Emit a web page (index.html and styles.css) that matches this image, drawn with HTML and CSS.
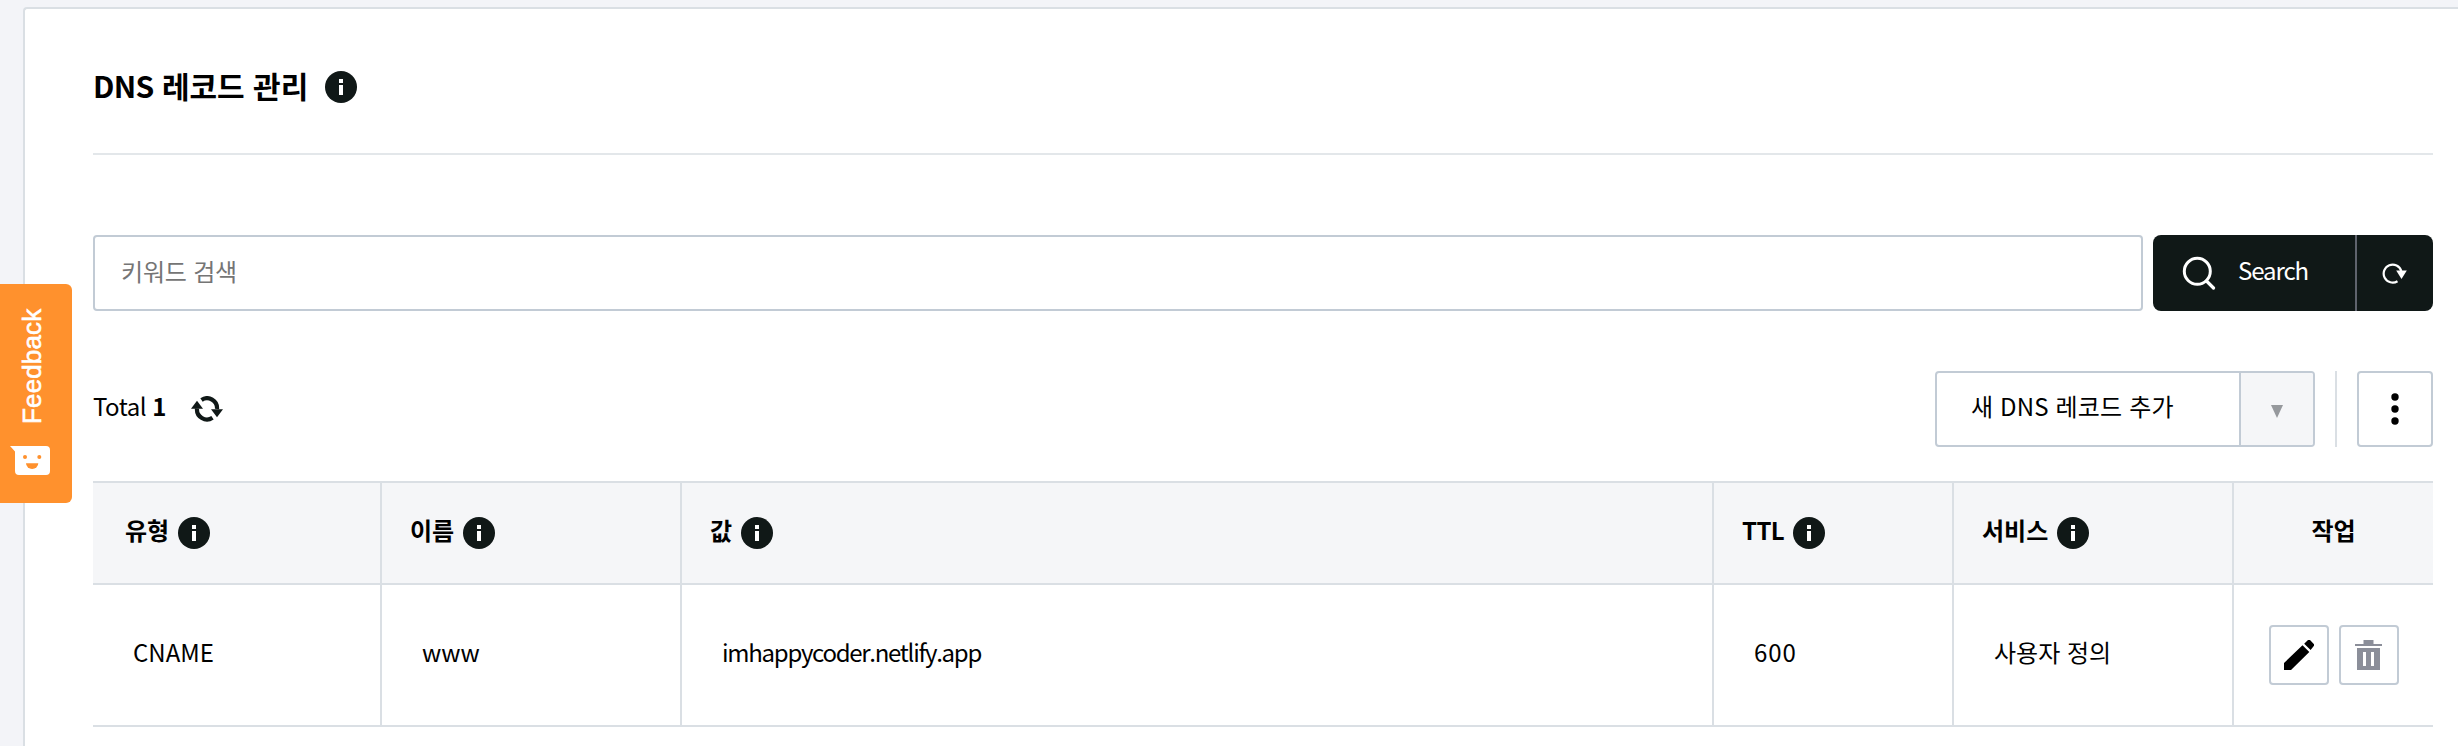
FILE: index.html
```html
<!DOCTYPE html>
<html lang="ko">
<head>
<meta charset="utf-8">
<title>DNS 레코드 관리</title>
<link rel="stylesheet" href="styles.css">
</head>
<body>
<svg class="defs" width="0" height="0">
  <symbol id="info" viewBox="0 0 32 32"><circle cx="16" cy="16" r="16" fill="#101817"/><path d="M14 8h4v4h-4zM14 14h4v10h-4z" fill="#fff"/></symbol>
</svg>
<main class="card">
  <header class="card-head">
    <h1 class="title"><span class="latin">DNS</span> 레코드 관리</h1>
    <svg class="info"><use href="#info"/></svg>
  </header>
  <form class="search">
    <input class="search-input" type="text" placeholder="키워드 검색">
    <div class="search-actions">
      <button class="search-btn" type="button">
        <svg width="34" height="34" viewBox="0 0 34 34" fill="none" stroke="#fff" stroke-width="3"><circle cx="15.3" cy="15.3" r="13"/><path d="M24.5 25l7 7" stroke-width="3.2" stroke-linecap="round"/></svg>
        <span class="search-label">Search</span>
      </button>
      <button class="reset-btn" type="button">
        <svg width="26" height="22" viewBox="0 0 26 22"><path d="M15.5 19.2A9 9 0 1 1 19.3 9" fill="none" stroke="#fff" stroke-width="2.2"/><path d="M14.2 8.6h10.6l-5.3 8.4z" fill="#fff"/></svg>
      </button>
    </div>
  </form>
  <div class="toolbar">
    <div class="total">Total <b>1</b></div>
    <svg class="refresh" width="32" height="26" viewBox="0 0 32 26"><g fill="none" stroke="#101817" stroke-width="4.2"><path d="M10.5 3.9A10 10 0 0 1 26 13"/><path d="M21.5 21.7A10 10 0 0 1 6 12.5"/></g><path d="M0 12.8h12L6 4.8zM20 13.2h12l-6 8z" fill="#101817"/></svg>
    <div class="add-group">
      <button class="add-btn" type="button">새 DNS 레코드 추가</button>
      <button class="add-caret" type="button"><svg width="12" height="13" viewBox="0 0 12 13"><path d="M0 0h12L6 13z" fill="#96999d"/></svg></button>
    </div>
    <span class="separator"></span>
    <button class="more" type="button"><svg width="8" height="32" viewBox="0 0 8 32"><circle cx="4" cy="4" r="3.7"/><circle cx="4" cy="16" r="3.7"/><circle cx="4" cy="28" r="3.7"/></svg></button>
  </div>
  <div class="table">
    <div class="row head">
      <div class="cell c-type"><span>유형</span><svg class="info"><use href="#info"/></svg></div>
      <div class="cell"><span>이름</span><svg class="info"><use href="#info"/></svg></div>
      <div class="cell"><span>값</span><svg class="info"><use href="#info"/></svg></div>
      <div class="cell"><span class="ttl">TTL</span><svg class="info"><use href="#info"/></svg></div>
      <div class="cell"><span>서비스</span><svg class="info"><use href="#info"/></svg></div>
      <div class="cell c-work"><span>작업</span></div>
    </div>
    <div class="row body">
      <div class="cell c-type"><span>CNAME</span></div>
      <div class="cell"><span>www</span></div>
      <div class="cell"><span class="host">imhappycoder.netlify.app</span></div>
      <div class="cell"><span class="num">600</span></div>
      <div class="cell"><span>사용자 정의</span></div>
      <div class="cell c-work">
        <button class="icon-btn" type="button"><svg width="30" height="30" viewBox="0 0 30 30"><path d="M0 30v-7L18.5 5.2l6.8 6.8L7 30zM20.2 3.7L24 0h2l4 4.2v1.6l-3.4 4.3z"/></svg></button>
        <button class="icon-btn" type="button"><svg width="27" height="30" viewBox="0 0 27 30"><path d="M8.5 0h10v4H27v2H0V4h8.500zM2 8h23v22H2zM8 12v14h3V12zM16 12v14h3V12z" fill="#8b8e99" fill-rule="evenodd"/></svg></button>
      </div>
    </div>
  </div>
</main>
<aside class="feedback">
  <span class="feedback-text">Feedback</span>
  <svg width="40" height="29" viewBox="0 0 40 29"><path d="M0 0h36a4 4 0 0 1 4 4v21a4 4 0 0 1-4 4H9a4 4 0 0 1-4-4V5.500z" fill="#fff"/><g fill="#ff912d"><circle cx="15" cy="11" r="2"/><circle cx="29.300" cy="11" r="2"/><path d="M16 17.300h12.300a6.150 5.700 0 0 1-12.300 0z"/></g></svg>
</aside>
</body>
</html>
```
FILE: styles.css
```css
* { box-sizing: border-box; }
html, body { height: 100%; overflow: hidden; }
body {
  margin: 0;
  padding: 7px 0 0 23px;
  background: #f3f4f8;
  color: #000;
  font: 24px/36px "Noto Sans CJK KR", "Noto Sans", sans-serif;
}
svg { display: block; flex: none; }
button { margin: 0; padding: 0; border: 0; background: none; color: inherit; font: inherit; display: flex; align-items: center; justify-content: center; }
.defs { position: absolute; }
.card {
  height: 760px;
  padding: 0 25px 0 68px;
  background: #fff;
  border: solid #dadfe4;
  border-width: 2px 0 0 2px;
  border-top-left-radius: 4px;
}
.info { width: 32px; height: 32px; }
.card-head { display: flex; align-items: flex-start; gap: 17px; height: 146px; padding-top: 62px; border-bottom: 2px solid #e3e7ea; }
.title { margin: -8px 0 0; font-size: 30px; line-height: 44px; font-weight: 700; }
.latin { letter-spacing: -.7px; }

.search { display: flex; gap: 10px; height: 76px; margin-top: 80px; }
.search-input {
  flex: 1; min-width: 0; padding: 0 26px 5px; border: 2px solid #c2cbd5; border-radius: 4px;
  background: #fff; font: inherit; letter-spacing: -.2px; outline: 0;
}
.search-input::placeholder { color: #757575; opacity: 1; }
.search-actions { display: flex; width: 280px; background: #101817; border-radius: 8px; color: #fff; }
.search-btn { width: 204px; justify-content: flex-start; padding-left: 29px; gap: 22px; border-right: 2px solid #5f636d; }
.search-label { margin-top: -6px; letter-spacing: -1.1px; }
.reset-btn { flex: 1; }

.toolbar { display: flex; align-items: center; height: 76px; margin-top: 60px; }
.total { width: 98px; margin-top: -6px; letter-spacing: -.5px; white-space: nowrap; }
.total b { font-weight: 700; }
.add-group { display: flex; width: 380px; height: 76px; margin-left: auto; border: 2px solid #c2cbd5; border-radius: 4px; overflow: hidden; }
.add-btn { width: 304px; padding: 0 30px 6px 34px; justify-content: flex-start; border-right: 2px solid #c2cbd5; letter-spacing: .15px; white-space: nowrap; }
.add-caret { flex: 1; background: #f5f6f8; padding-top: 4px; }
.separator { width: 2px; height: 76px; margin: 0 20px; background: #dadfe4; }
.more { width: 76px; height: 76px; border: 2px solid #c2cbd5; border-radius: 4px; }

.table { margin-top: 34px; border-top: 2px solid #dadfe4; }
.row { display: grid; grid-template-columns: 289px 300px 1032px 240px 280px 199px; border-bottom: 2px solid #dadfe4; }
.head { height: 102px; background: #f5f6f8; font-weight: 700; }
.body { height: 142px; }
.cell { display: flex; align-items: center; gap: 9px; padding-left: 28px; border-right: 2px solid #dadfe4; white-space: nowrap; }
.cell > span { margin-top: -6px; }
.ttl { letter-spacing: -.6px; }
.host { letter-spacing: -1.28px; }
.num { letter-spacing: .9px; }
.head .c-type { padding-left: 32px; }
.body .cell { padding-left: 40px; }
.c-work { border-right: 0; justify-content: center; }
.head .c-work { padding-left: 0; }
.body .c-work { gap: 10px; padding-left: 0; padding-right: 0; }
.icon-btn { width: 60px; height: 60px; border: 2px solid #c2cbd5; border-radius: 4px; }

.feedback {
  position: absolute; left: 0; top: 284px; width: 72px; height: 219px;
  padding: 22px 0 0 10px; background: #ff912d; border-radius: 0 6px 6px 0; color: #fff;
}
.feedback-text {
  display: block; width: 44px; height: 118px; margin-bottom: 22px;
  font: 26px/44px "Liberation Sans", Arial, sans-serif;
  letter-spacing: .15px;
  -webkit-text-stroke: .6px #fff;
  writing-mode: vertical-rl; transform: rotate(180deg);
}
```
